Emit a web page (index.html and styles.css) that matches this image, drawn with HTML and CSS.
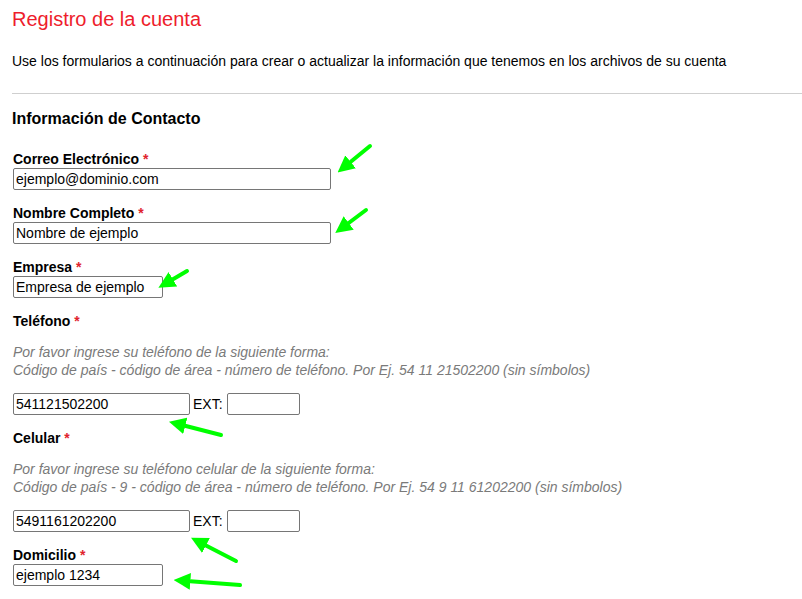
FILE: index.html
```html
<!DOCTYPE html>
<html lang="es">
<head>
    <meta charset="UTF-8">
    <meta name="viewport" content="width=device-width, initial-scale=1.0">
    <title>Registro de la cuenta</title>
    <link rel="stylesheet" href="styles.css">
</head>
<body>

    <main class="page">
        <h1>Registro de la cuenta</h1>
        <p class="intro">Use los formularios a continuación para crear o actualizar la información que tenemos en los archivos de su cuenta</p>

        <hr>

        <h2>Información de Contacto</h2>

        <form class="account-form">
            <div class="field">
                <label for="email">Correo Electrónico <span class="req">*</span></label>
                <input type="text" id="email" class="wide" value="ejemplo@dominio.com">
            </div>
            <div class="field">
                <label for="name">Nombre Completo <span class="req">*</span></label>
                <input type="text" id="name" class="wide" value="Nombre de ejemplo">
            </div>
            <div class="field">
                <label for="company">Empresa <span class="req">*</span></label>
                <input type="text" id="company" class="short" value="Empresa de ejemplo">
            </div>
            <div class="field">
                <label for="phone">Teléfono <span class="req">*</span></label>
                <p class="hint">Por favor ingrese su teléfono de la siguiente forma:<br>
                Código de país - código de área - número de teléfono. Por Ej. 54 11 21502200 (sin símbolos)</p>
                <div class="phone-row">
                    <input type="text" id="phone" class="phone" value="541121502200">
                    <span>EXT:</span>
                    <input type="text" class="ext" value="">
                </div>
            </div>
            <div class="field">
                <label for="mobile">Celular <span class="req">*</span></label>
                <p class="hint">Por favor ingrese su teléfono celular de la siguiente forma:<br>
                Código de país - 9 - código de área - número de teléfono. Por Ej. 54 9 11 61202200 (sin símbolos)</p>
                <div class="phone-row">
                    <input type="text" id="mobile" class="phone" value="5491161202200">
                    <span>EXT:</span>
                    <input type="text" class="ext" value="">
                </div>
            </div>
            <div class="field">
                <label for="address">Domicilio <span class="req">*</span></label>
                <input type="text" id="address" class="short" value="ejemplo 1234">
            </div>
        </form>
    </main>

    <!-- flechas de anotación -->
    <svg class="arrows" width="802" height="599" viewBox="0 0 802 599">
        <defs>
            <marker id="head" viewBox="0 0 10 10" refX="2" refY="5" markerWidth="4.2" markerHeight="4.2" orient="auto">
                <path d="M0 0 L10 5 L0 10 z" fill="#00ff00"/>
            </marker>
        </defs>
        <g stroke="#00ff00" stroke-width="4" stroke-linecap="round" fill="none" marker-end="url(#head)">
            <line x1="370" y1="146" x2="348" y2="164"/>
            <line x1="366" y1="210" x2="346" y2="225"/>
            <line x1="187" y1="271" x2="170" y2="281"/>
            <line x1="221" y1="435" x2="182" y2="425"/>
            <line x1="236" y1="561" x2="203" y2="544"/>
            <line x1="240" y1="585" x2="187" y2="581"/>
        </g>
    </svg>

</body>
</html>
```

FILE: styles.css
```css
body {
    font-family: 'Liberation Sans', Arial, sans-serif;
    background-color: #fff;
    color: #000;
    margin: 0;
}

.page {
    padding: 0 0 0 12px;
}

h1 {
    font-size: 20px;
    font-weight: normal;
    color: #ee1d2c;
    margin: 0;
    padding-top: 8px;
    line-height: 23px;
}

.intro {
    font-size: 14px;
    margin: 22px 0 0 0;
    line-height: 16px;
}

hr {
    border: none;
    border-top: 1px solid #cfcfcf;
    margin: 24px 0 0 0;
}

h2 {
    font-size: 16px;
    font-weight: bold;
    margin: 16px 0 0 0;
    line-height: 18px;
}

.account-form {
    padding-left: 1px;
    margin-top: 23px;
}

.field {
    margin-bottom: 15px;
}

label {
    display: block;
    font-size: 14px;
    font-weight: bold;
    line-height: 16px;
    margin-bottom: 1px;
}

.req {
    color: #e0232c;
}

.hint {
    font-size: 14px;
    font-style: italic;
    color: #7a7a7a;
    line-height: 18px;
    margin: 14px 0 14px 0;
}

input {
    font-family: 'Liberation Sans', Arial, sans-serif;
    font-size: 14px;
    height: 22px;
    box-sizing: border-box;
    padding: 1px 2px;
    border: 1px solid #767676;
    border-radius: 2px;
    color: #000;
    margin: 0;
}

.wide {
    width: 318px;
}

.short {
    width: 150px;
}

.phone {
    width: 177px;
}

.ext {
    width: 73px;
}

.phone-row {
    display: flex;
    align-items: center;
    gap: 3px;
    font-size: 14px;
}

.phone-row span {
    margin-right: 1px;
}

.arrows {
    position: absolute;
    top: 0;
    left: 0;
    pointer-events: none;
}
```
